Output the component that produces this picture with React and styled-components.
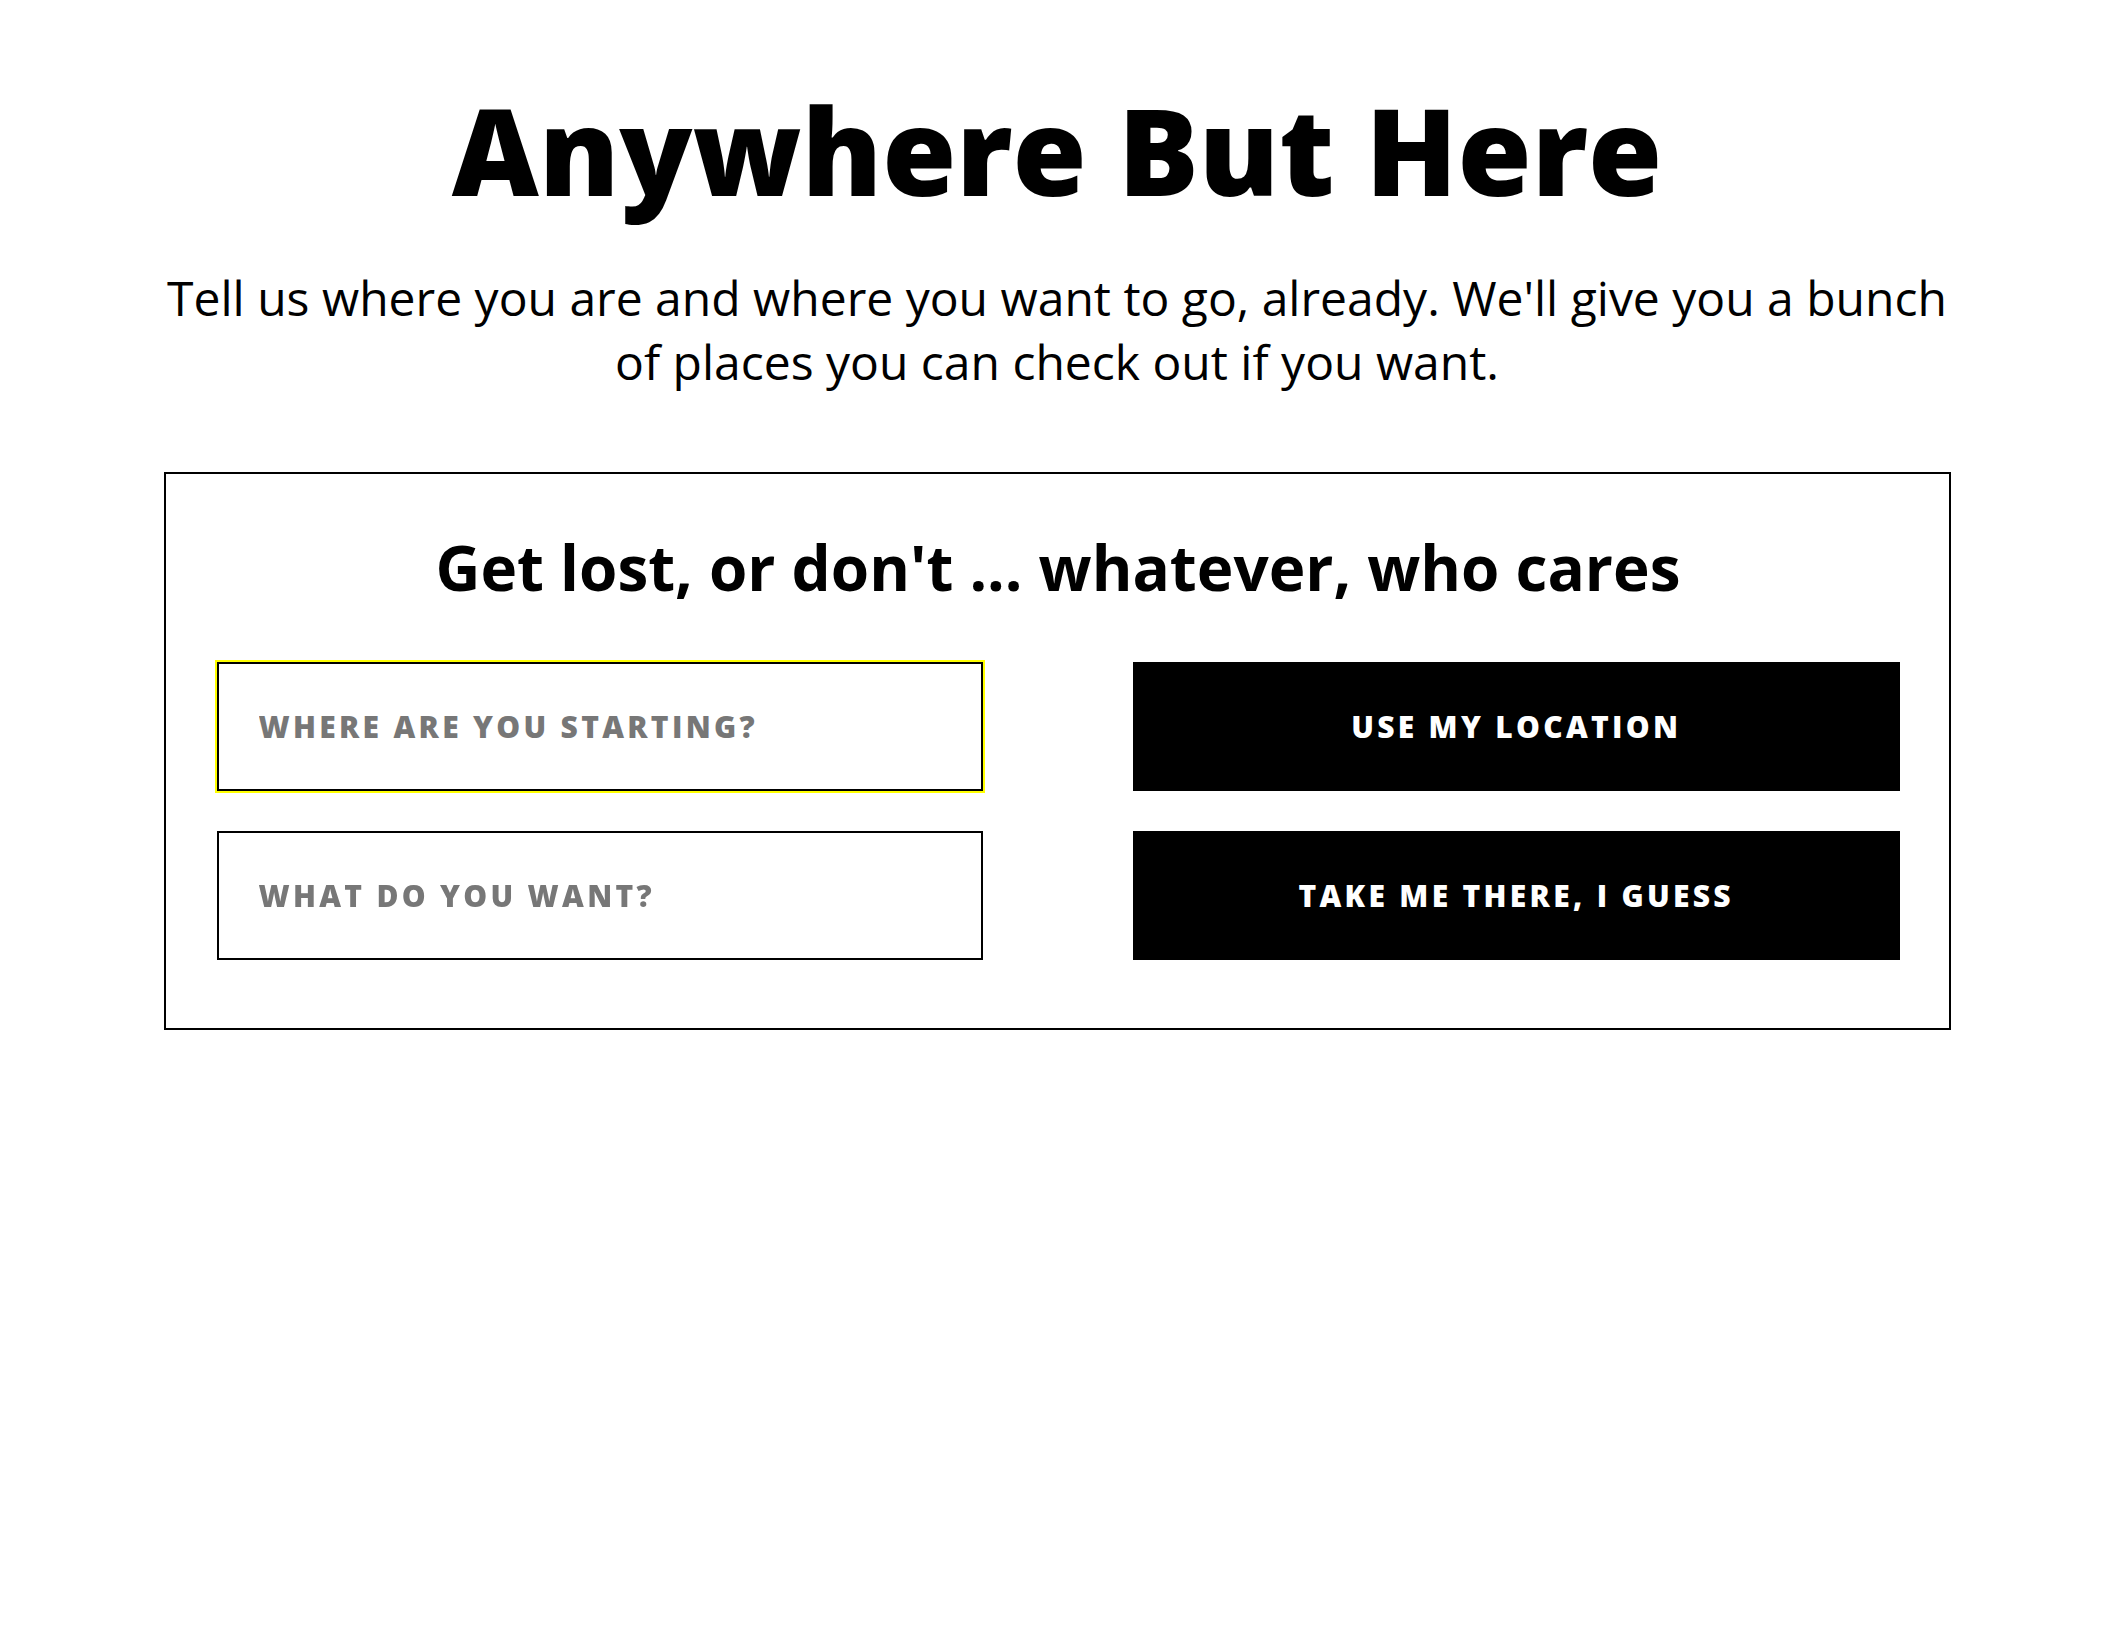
import React from 'react';
import styled, { createGlobalStyle, css } from 'styled-components';

const GlobalStyle = createGlobalStyle`
  html, body {
    margin: 0;
    padding: 0;
    background: #fff;
  }
  body {
    font-family: 'Open Sans', 'Noto Sans', sans-serif;
    color: #000;
  }
  * {
    box-sizing: border-box;
  }
`;

const Page = styled.main`
  padding: 90px 12px 80px 0;
`;

const Container = styled.div`
  width: 1787px;
  margin: 0 auto;
  text-align: center;
`;

const Title = styled.h1`
  margin: 0;
  font-size: 120px;
  line-height: 120px;
  font-weight: 800;
`;

const Intro = styled.p`
  margin: 56px 0 0;
  font-size: 48px;
  line-height: 64px;
  font-weight: 400;
`;

const SearchCard = styled.section`
  margin-top: 78px;
  border: 2px solid #000;
  padding: 56px 49px 68px 51px;
`;

const CardHeading = styled.h2`
  margin: 0 0 58px;
  font-size: 62px;
  line-height: 74px;
  font-weight: 700;
`;

const Grid = styled.div`
  display: grid;
  grid-template-columns: 1fr 1fr;
  column-gap: 150px;
  row-gap: 40px;
`;

const fieldText = css`
  font-family: 'Open Sans', 'Noto Sans', sans-serif;
  font-size: 30px;
  font-weight: 800;
  letter-spacing: 3.3px;
  text-transform: uppercase;
`;

const Field = styled.input`
  ${fieldText};
  height: 129px;
  width: 100%;
  padding: 0 40px;
  border: 2px solid #000;
  border-radius: 0;
  background: #fff;
  color: #000;
  caret-color: #000;
  outline: none;
  box-shadow: ${(p) => (p.$highlight ? '0 0 0 2px #ffff00' : 'none')};

  &::placeholder {
    color: #777;
    opacity: 1;
  }

  &:focus {
    box-shadow: 0 0 0 2px #ffff00;
  }
`;

const ActionButton = styled.button`
  ${fieldText};
  height: 129px;
  width: 100%;
  border: none;
  border-radius: 0;
  background: #000;
  color: #fff;
  cursor: pointer;
`;

const App = () => {
  return (
    <Page>
      <GlobalStyle />
      <Container>
        <Title>Anywhere But Here</Title>
        <Intro>
          Tell us where you are and where you want to go, already. We'll give
          you a bunch of places you can check out if you want.
        </Intro>
        <SearchCard>
          <CardHeading>Get lost, or don't ... whatever, who cares</CardHeading>
          <Grid>
            <Field
              $highlight
              autoFocus
              type='text'
              placeholder='Where are you starting?'
            />
            <ActionButton type='button'>Use my location</ActionButton>
            <Field type='text' placeholder='What do you want?' />
            <ActionButton type='button'>Take me there, I guess</ActionButton>
          </Grid>
        </SearchCard>
      </Container>
    </Page>
  );
};

export default App;
